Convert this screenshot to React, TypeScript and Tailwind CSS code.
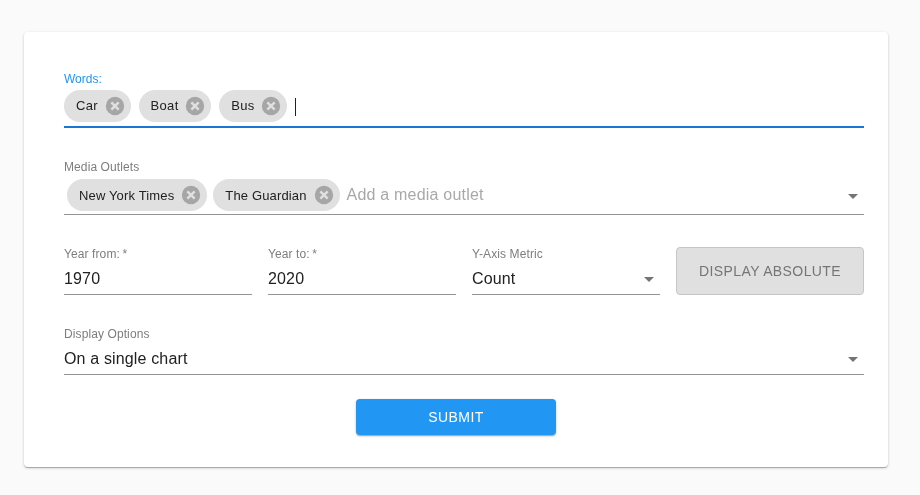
import React from 'react';

const font = "font-['Liberation_Sans',Arial,sans-serif]";

const Chip = ({ label, wide }: { label: string; wide?: boolean }) => (
  <div className="flex h-8 items-center rounded-2xl bg-[#e0e0e0] pl-3">
    <span className={`text-[13px] leading-none text-[#212121] ${wide ? '-mt-[1px] mr-[5.5px] tracking-[0.35px]' : 'mr-[6px] tracking-[0.15px]'}`}>{label}</span>
    <svg viewBox="0 0 24 24" className="mr-[5px] h-[22px] w-[22px] shrink-0">
      <circle cx="12" cy="12" r="10" fill="#a6a6a6" />
      <path d="M8 8l8 8M16 8l-8 8" stroke="#e0e0e0" strokeWidth="2.6" fill="none" />
    </svg>
  </div>
);

const Arrow = () => (
  <svg viewBox="0 0 24 24" className="-mr-[1px] h-6 w-6 shrink-0" fill="#757575">
    <path d="M7 10l5 5 5-5z" />
  </svg>
);

const Field = ({ label, value, arrow }: { label: string; value: string; arrow?: boolean }) => (
  <div>
    <div className="h-[15px] text-xs leading-[15px] tracking-[0.1px] text-[#7d7d7d]">{label}</div>
    <div className="flex h-[33px] items-center justify-between border-b border-[#949494] pt-[1px]">
      <span className="text-base leading-none tracking-[0.15px] text-[#212121]">{value}</span>
      {arrow && <Arrow />}
    </div>
  </div>
);

export default function App() {
  return (
    <div className={`${font} min-h-[495px] bg-[#fafafa] pl-6 pr-8 pt-8`}>
      <div className="h-[435px] rounded bg-white pl-10 pr-6 pt-[40px] shadow-[0_1px_3px_rgba(0,0,0,0.2),0_1px_1px_rgba(0,0,0,0.14),0_2px_1px_-1px_rgba(0,0,0,0.12)] will-change-transform">
        <div className="h-[15px] text-xs leading-[15px] text-[#2196f3]">Words:</div>
        <div className="flex h-[41px] items-start gap-2 border-b-2 border-[#1976d2] pt-[3px]">
          <Chip label="Car" wide />
          <Chip label="Boat" wide />
          <Chip label="Bus" wide />
          <div className="mt-[8px] h-[18px] w-px bg-[#212121]" />
        </div>

        <div className="mt-[32px] h-[15px] text-xs leading-[15px] tracking-[0.1px] text-[#7d7d7d]">Media Outlets</div>
        <div className="flex h-[40px] items-start border-b border-[#949494] pl-[3px] pt-[4px]">
          <div className="flex gap-[6px]">
            <Chip label="New York Times" />
            <Chip label="The Guardian" />
          </div>
          <span className="ml-[7px] mt-[7px] text-base leading-[18px] tracking-[0.2px] text-[#a8a8a8]">Add a media outlet</span>
          <div className="ml-auto mt-[5px]">
            <Arrow />
          </div>
        </div>

        <div className="mt-[32px] grid grid-cols-4 gap-4">
          <Field label={'Year from:\u2009*'} value="1970" />
          <Field label={'Year to:\u2009*'} value="2020" />
          <Field label="Y-Axis Metric" value="Count" arrow />
          <button className="h-12 rounded border border-[#c6c6c6] bg-[#e0e0e0] text-sm tracking-[0.4px] text-[#757575]">
            DISPLAY ABSOLUTE
          </button>
        </div>

        <div className="mt-[32px]">
          <Field label="Display Options" value="On a single chart" arrow />
        </div>

        <div className="mt-6 flex justify-center pr-4">
          <button className="h-9 w-[200px] rounded bg-[#2196f3] text-sm tracking-[0.4px] text-white shadow-[0_1px_3px_rgba(0,0,0,0.2),0_1px_1px_rgba(0,0,0,0.14),0_2px_1px_-1px_rgba(0,0,0,0.12)]">
            SUBMIT
          </button>
        </div>
      </div>
    </div>
  );
}
